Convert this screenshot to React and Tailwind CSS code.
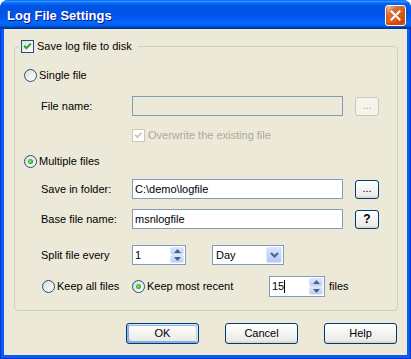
import React from "react";

function Radio({ checked }) {
  return (
    <span className="w-[13px] h-[13px] rounded-full border border-[#1c5180] bg-[linear-gradient(135deg,#dcdcd7,#ffffff)] shrink-0 flex items-center justify-center">
      {checked && (
        <span className="w-[5px] h-[5px] rounded-full bg-[radial-gradient(circle_at_45%_45%,#9cf09c_0%,#31b531_50%,#15861a_100%)]" />
      )}
    </span>
  );
}

function Check({ disabled }) {
  return (
    <span
      className={
        disabled
          ? "w-[13px] h-[13px] border border-[#cac8bb] bg-white shrink-0 flex items-center justify-center"
          : "w-[13px] h-[13px] border border-[#1c5180] bg-[linear-gradient(135deg,#dcdcd7,#ffffff)] shrink-0 flex items-center justify-center"
      }
    >
      <svg width="11" height="11" viewBox="0 0 11 11">
        <path
          d="M2.2 4.8 L4.4 7.1 L8.8 2.6"
          fill="none"
          stroke={disabled ? "#cac8bb" : "#21a121"}
          strokeWidth="2"
        />
      </svg>
    </span>
  );
}

function XPButton({ children, def, className = "" }) {
  return (
    <div
      className={
        (def
          ? "border border-[#003c74] rounded-[3px] bg-[linear-gradient(180deg,#ffffff,#ecebe6_86%,#d6d0c5)] shadow-[inset_-1px_1px_#cee7ff,inset_1px_2px_#98b8ea,inset_-2px_2px_#bcd4f6,inset_1px_-1px_#89ade4,inset_2px_-2px_#89ade4] flex items-center justify-center "
          : "border border-[#003c74] rounded-[3px] bg-[linear-gradient(180deg,#ffffff,#ecebe6_86%,#d6d0c5)] flex items-center justify-center ") +
        className
      }
    >
      {children}
    </div>
  );
}

function SpinBtn({ up }) {
  return (
    <div className="flex-1 rounded-[2px] border border-[#dbe5fb] bg-[linear-gradient(180deg,#d9e4fc,#bccff8)] flex items-center justify-center">
      <svg width="7" height="4" viewBox="0 0 7 4">
        {up ? (
          <polygon points="0,4 3.5,0 7,4" fill="#4d6185" />
        ) : (
          <polygon points="0,0 3.5,4 7,0" fill="#4d6185" />
        )}
      </svg>
    </div>
  );
}

function Spinner({ value, cursor, className }) {
  return (
    <div className={"border border-[#7f9db9] bg-white flex " + className}>
      <div className="flex-1 flex items-center pl-[2px]">
        <span>{value}</span>
        {cursor && <span className="w-px h-[13px] bg-black" />}
      </div>
      <div className="w-[15px] flex flex-col py-[1px] pr-[1px]">
        <SpinBtn up />
        <SpinBtn />
      </div>
    </div>
  );
}

export default function App() {
  return (
    <div className="w-[411px] h-[359px] rounded-t-[8px] overflow-hidden flex flex-col font-['Liberation_Sans',Arial,sans-serif] text-[11px] text-black bg-[#0a5ae8]">
      {/* Title bar */}
      <div className="h-[29px] shrink-0 flex items-center pl-[7px] pr-[5px] bg-[linear-gradient(180deg,#0058ee_0%,#3593ff_4%,#288eff_6%,#127dff_8%,#036ffc_10%,#0262ee_14%,#0057e5_20%,#0054e3_24%,#0055eb_56%,#005bf5_66%,#026afe_76%,#0062ef_86%,#0052d6_92%,#0040ab_94%,#003092_100%)]">
        <div className="flex-1 pt-[2px] text-white font-bold text-[13px] [text-shadow:1px_1px_0_#0f1089]">
          Log File Settings
        </div>
        <div className="w-[21px] h-[21px] mt-[2px] rounded-[3px] border border-white bg-[radial-gradient(circle_at_90%_90%,#cc4600_0%,#dc6527_55%,#cd7546_70%,#ffccb2_90%,#ffffff_100%)] shadow-[inset_0_-1px_2px_1px_#da4600] flex items-center justify-center">
          <svg width="11" height="11" viewBox="0 0 11 11">
            <path d="M1.5 1.5 L9.5 9.5 M9.5 1.5 L1.5 9.5" stroke="#ffffff" strokeWidth="2" strokeLinecap="square" />
          </svg>
        </div>
      </div>

      {/* Body with frame */}
      <div className="flex-1 flex border-l border-r border-b border-[#0831d9] bg-[#0b5cf0] px-[3px] pb-[3px]">
        <div className="flex-1 bg-[#ece9d8] flex flex-col">
          {/* Group box */}
          <div className="relative ml-[10px] mt-[17px] w-[384px] h-[265px] border border-[#d0d0bf] rounded-[4px] flex flex-col">
            <div className="absolute left-[4px] -top-[7px] h-[13px] flex items-center gap-[3px] bg-[#ece9d8] pl-[2px] pr-[6px]">
              <Check />
              <span>Save log file to disk</span>
            </div>

            {/* Single file */}
            <div className="mt-[20px] h-[17px] pl-[9px] flex items-center gap-[2px]">
              <Radio />
              <span>Single file</span>
            </div>

            {/* File name */}
            <div className="mt-[12px] h-[20px] pl-[26px] flex items-center">
              <span className="w-[91px]">File name:</span>
              <div className="w-[211px] h-[20px] border border-[#7f9db9] bg-[#ece9d8]" />
              <div className="ml-[12px] w-[24px] h-[19px] rounded-[3px] border border-[#cac8bb] bg-[#f5f4ea] text-[#aca899] flex items-center justify-center leading-none pb-[2px]">
                ...
              </div>
            </div>

            {/* Overwrite */}
            <div className="mt-[11px] h-[17px] pl-[117px] flex items-center gap-[3px] text-[#aca899]">
              <Check disabled />
              <span>Overwrite the existing file</span>
            </div>

            {/* Multiple files */}
            <div className="mt-[9px] h-[17px] pl-[9px] flex items-center gap-[2px]">
              <Radio checked />
              <span>Multiple files</span>
            </div>

            {/* Save in folder */}
            <div className="mt-[9px] h-[20px] pl-[26px] flex items-center">
              <span className="w-[91px]">Save in folder:</span>
              <div className="w-[211px] h-[20px] border border-[#7f9db9] bg-white flex items-center pl-[2px]">
                C:\demo\logfile
              </div>
              <XPButton className="ml-[12px] w-[24px] h-[19px] leading-none pb-[2px]">...</XPButton>
            </div>

            {/* Base file name */}
            <div className="mt-[10px] h-[20px] pl-[26px] flex items-center">
              <span className="w-[91px]">Base file name:</span>
              <div className="w-[211px] h-[20px] border border-[#7f9db9] bg-white flex items-center pl-[2px]">
                msnlogfile
              </div>
              <XPButton className="ml-[12px] w-[24px] h-[19px] font-bold text-[12px]">?</XPButton>
            </div>

            {/* Split file every */}
            <div className="mt-[16px] h-[20px] pl-[26px] flex items-center">
              <span className="w-[91px]">Split file every</span>
              <Spinner value="1" className="w-[54px] h-[20px]" />
              <div className="ml-[26px] w-[72px] h-[20px] border border-[#7f9db9] bg-white flex">
                <div className="flex-1 flex items-center pl-[3px]">Day</div>
                <div className="w-[16px] m-[1px] rounded-[2px] border border-[#dbe5fb] bg-[linear-gradient(180deg,#d9e4fc,#b4c9f7)] flex items-center justify-center">
                  <svg width="9" height="6" viewBox="0 0 9 6">
                    <path d="M1 1 L4.5 4.5 L8 1" fill="none" stroke="#4d6185" strokeWidth="2" />
                  </svg>
                </div>
              </div>
            </div>

            {/* Keep */}
            <div className="mt-[11px] h-[21px] pl-[27px] flex items-center">
              <div className="w-[90px] flex items-center gap-[2px]">
                <Radio />
                <span>Keep all files</span>
              </div>
              <div className="w-[137px] flex items-center gap-[2px]">
                <Radio checked />
                <span>Keep most recent</span>
              </div>
              <Spinner value="15" cursor className="w-[56px] h-[21px]" />
              <span className="ml-[4px]">files</span>
            </div>
          </div>

          {/* Buttons */}
          <div className="mt-[12px] pl-[122px] flex gap-[26px]">
            <XPButton def className="w-[73px] h-[21px]">OK</XPButton>
            <XPButton className="w-[73px] h-[21px]">Cancel</XPButton>
            <XPButton className="w-[73px] h-[21px]">Help</XPButton>
          </div>
        </div>
      </div>
    </div>
  );
}
